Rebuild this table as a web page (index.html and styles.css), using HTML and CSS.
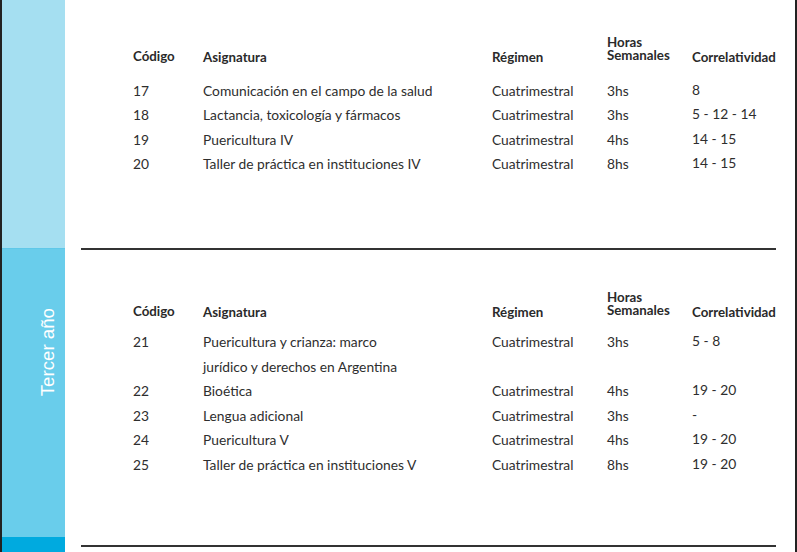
FILE: index.html
```html
<!DOCTYPE html>
<html lang="es">
<head>
<meta charset="utf-8">
<title>Tercer año</title>
<link rel="stylesheet" href="styles.css">
</head>
<body>
<div class="page">
  <div class="edge"></div>
  <aside class="sidebar">
    <div class="band band-light"></div>
    <div class="band band-mid"><span class="year">Tercer año</span></div>
    <div class="band band-dark"></div>
  </aside>
  <main class="main">
    <section class="block block-first">
      <div class="thead grid">
        <div class="th th-code">Código</div>
        <div class="th">Asignatura</div>
        <div class="th">Régimen</div>
        <div class="th th-hours">Horas<br>Semanales</div>
        <div class="th">Correlatividad</div>
      </div>
      <div class="tbody grid">
        <div>17</div><div>Comunicación en el campo de la salud</div><div>Cuatrimestral</div><div>3hs</div><div class="corr">8</div>
        <div>18</div><div>Lactancia, toxicología y fármacos</div><div>Cuatrimestral</div><div>3hs</div><div class="corr">5 - 12 - 14</div>
        <div>19</div><div>Puericultura IV</div><div>Cuatrimestral</div><div>4hs</div><div class="corr">14 - 15</div>
        <div>20</div><div>Taller de práctica en instituciones IV</div><div>Cuatrimestral</div><div>8hs</div><div class="corr">14 - 15</div>
      </div>
    </section>
    <section class="block block-second">
      <div class="thead grid">
        <div class="th th-code">Código</div>
        <div class="th">Asignatura</div>
        <div class="th">Régimen</div>
        <div class="th th-hours">Horas<br>Semanales</div>
        <div class="th">Correlatividad</div>
      </div>
      <div class="tbody grid">
        <div>21</div><div>Puericultura y crianza: marco<br>jurídico y derechos en Argentina</div><div>Cuatrimestral</div><div>3hs</div><div class="corr">5 - 8</div>
        <div>22</div><div>Bioética</div><div>Cuatrimestral</div><div>4hs</div><div class="corr">19 - 20</div>
        <div>23</div><div>Lengua adicional</div><div>Cuatrimestral</div><div>3hs</div><div class="corr">-</div>
        <div>24</div><div>Puericultura V</div><div>Cuatrimestral</div><div>4hs</div><div class="corr">19 - 20</div>
        <div>25</div><div>Taller de práctica en instituciones V</div><div>Cuatrimestral</div><div>8hs</div><div class="corr">19 - 20</div>
      </div>
    </section>
  </main>
  <div class="edge edge-right"></div>
</div>
</body>
</html>
```
FILE: styles.css
```css
* { box-sizing: border-box; }

html, body {
  margin: 0;
  padding: 0;
  background: #ffffff;
}

.page {
  display: flex;
  width: 797px;
  height: 552px;
  overflow: hidden;
  font-family: "Lato", "Open Sans", sans-serif;
  font-size: 13.8px;
  color: #2e2e2e;
}

.edge {
  flex: 0 0 2px;
  background: #222222;
}

.edge-right {
  flex: 0 0 3px;
}

.sidebar {
  flex: 0 0 63px;
  display: flex;
  flex-direction: column;
}

.band-light {
  flex: 0 0 248px;
  background: #a5dff1;
}

.band-mid {
  flex: 0 0 289px;
  background: #69cdeb;
  border-top: 1px solid #5fc8e9;
  padding-top: 59px;
  padding-left: 35.6px;
  display: flex;
  flex-direction: column;
  align-items: flex-start;
}

.band-dark {
  flex: 1 1 auto;
  background: #00aadf;
}

.year {
  writing-mode: vertical-rl;
  transform: rotate(180deg);
  font-family: "Liberation Sans", Arial, sans-serif;
  font-size: 18.7px;
  line-height: 20px;
  color: #ffffff;
  white-space: nowrap;
}

.main {
  flex: 1 1 auto;
  padding: 0 19px 0 16px;
}

.block {
  border-bottom: 2px solid #333333;
  padding-left: 52px;
}

.block-first {
  padding-top: 36.3px;
  padding-bottom: 71.4px;
}

.block-first .tbody { margin-top: 14.8px; }

.block-second {
  padding-top: 41.3px;
  padding-bottom: 67.9px;
}

.block-second .tbody { margin-top: 11.3px; }

.grid {
  display: grid;
  grid-template-columns: 70px 289px 115px 85px 1fr;
}

.thead {
  align-items: end;
}

.th {
  font-size: 13.3px;
  font-weight: 700;
  line-height: 13px;
  color: #2a2a2a;
}

.th-code { padding-bottom: 1px; }
.th-hours { padding-bottom: 1.5px; }

.tbody {
  line-height: 24.5px;
  align-items: start;
}

.corr { margin-top: -1px; }
```
